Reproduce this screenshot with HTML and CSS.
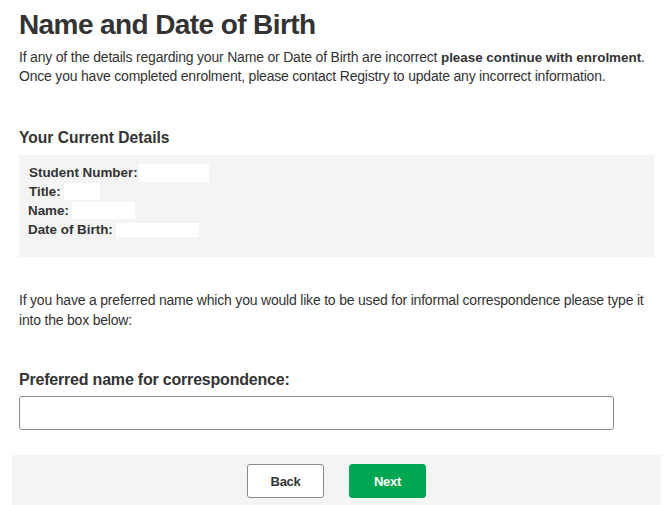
FILE: index.html
```html
<!DOCTYPE html>
<html>
<head>
<meta charset="utf-8">
<link rel="stylesheet" href="styles.css">
</head>
<body>
<div class="page">
  <div class="content">
    <h1 class="title">Name and Date of Birth</h1>
    <p class="intro">If any of the details regarding your Name or Date of Birth are incorrect <b>please continue with enrolment</b>. Once you have completed enrolment, please contact Registry to update any incorrect information.</p>
    <h2 class="section">Your Current Details</h2>
    <div class="details">
      <div class="row r1"><span class="lbl">Student Number:</span><span class="blank w70"></span></div>
      <div class="row r2"><span class="lbl">Title:</span><span class="blank w36"></span></div>
      <div class="row r3"><span class="lbl">Name:</span><span class="blank w63"></span></div>
      <div class="row r4"><span class="lbl">Date of Birth:</span><span class="blank w83"></span></div>
    </div>
    <p class="note">If you have a preferred name which you would like to be used for informal correspondence please type it into the box below:</p>
    <label class="field-label" for="pref">Preferred name for correspondence:</label>
    <input class="field" id="pref" type="text">
  </div>
  <div class="actions">
    <button class="btn btn-back">Back</button>
    <button class="btn btn-next">Next</button>
  </div>
</div>
</body>
</html>
```
FILE: styles.css
```css
html, body {
  margin: 0;
  padding: 0;
  background: #fff;
}
body {
  font-family: "Liberation Sans", Arial, sans-serif;
  color: #333;
}
.page {
  padding: 0 7px 0 12px;
}
.content {
  padding: 0 7px;
}
.title {
  margin: 0;
  padding-top: 7px;
  font-size: 28px;
  line-height: 36px;
  letter-spacing: -0.6px;
  font-weight: bold;
  color: #333;
}
.intro {
  margin: 5px 0 0;
  font-size: 14px;
  line-height: 19px;
  letter-spacing: -0.2px;
}
.intro b {
  font-size: 13.4px;
  letter-spacing: 0;
}
.section {
  margin: 42px 0 0;
  font-size: 15.6px;
  line-height: 20px;
  font-weight: bold;
}
.details {
  margin-top: 7px;
  background: #f4f4f4;
  height: 102px;
  padding: 8px 0 0 8px;
  box-sizing: border-box;
  font-size: 13.4px;
  font-weight: bold;
}
.row {
  display: flex;
  align-items: center;
  height: 19px;
}
.r1, .r2 { padding-left: 2px; }
.r3, .r4 { padding-left: 1px; }
.lbl {
  line-height: 19px;
}
.blank {
  display: inline-block;
  background: #fff;
  height: 18px;
  margin-left: 2px;
}
.r2 .blank { height: 17px; margin-left: 3px; }
.r3 .blank { height: 17px; margin-left: 3px; }
.r4 .blank { height: 14px; margin-left: 3px; }
.r1 .blank { margin-left: 1px; }
.w70 { width: 70px; }
.w36 { width: 36px; }
.w63 { width: 63px; }
.w83 { width: 83px; }
.note {
  margin: 33px 0 0;
  font-size: 14px;
  line-height: 20px;
  letter-spacing: -0.2px;
}
.field-label {
  display: block;
  margin-top: 40px;
  font-size: 16px;
  line-height: 20px;
  letter-spacing: -0.2px;
  font-weight: bold;
}
.field {
  display: block;
  margin-top: 6px;
  width: 595px;
  height: 34px;
  box-sizing: border-box;
  border: 1px solid #8a8a8a;
  border-radius: 3px;
  padding: 0 8px;
  font-size: 14px;
}
.actions {
  margin-top: 25px;
  background: #f4f4f4;
  height: 50px;
  display: flex;
  justify-content: center;
  align-items: flex-start;
  gap: 25px;
  padding-top: 9px;
  box-sizing: border-box;
}
.btn {
  width: 77px;
  height: 34px;
  border-radius: 3px;
  font-family: "Liberation Sans", Arial, sans-serif;
  font-size: 13px;
  letter-spacing: -0.3px;
  font-weight: bold;
  cursor: pointer;
}
.btn-back {
  background: #fff;
  border: 1px solid #8a8a8a;
  color: #333;
}
.btn-next {
  background: #00a651;
  border: 1px solid #00a651;
  color: #fff;
}
```
